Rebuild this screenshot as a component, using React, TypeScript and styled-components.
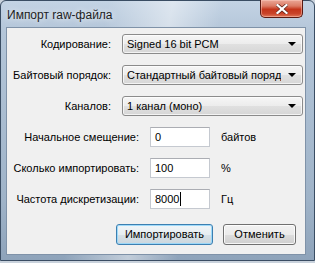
import React from "react";
import styled, { createGlobalStyle } from "styled-components";

const Global = createGlobalStyle`
  html, body { margin: 0; padding: 0; background: #c9d2dc; }
  body { font-family: "Liberation Sans", Arial, sans-serif; }
  * { box-sizing: border-box; }
`;

const Window = styled.div`
  width: 315px;
  height: 261px;
  border: 1px solid #3a4d63;
  border-radius: 6px 6px 0 0;
  background:
    linear-gradient(100deg, rgba(255,255,255,0) 30%, rgba(255,255,255,0.45) 48%, rgba(255,255,255,0) 62%),
    linear-gradient(180deg, #c3d3e4 0px, #b4c6d9 30px, #9fb3c8 200px, #8ea3ba 100%);
  display: flex;
  flex-direction: column;
  padding: 0 8px 5px 5px;
`;

const TitleBar = styled.div`
  height: 26px;
  display: flex;
  align-items: flex-start;
  justify-content: space-between;
`;

const Title = styled.div`
  font-size: 12px;
  color: #1e1e1e;
  padding: 7px 0 0 1px;
  text-shadow: 0 0 6px rgba(255,255,255,0.9);
`;

const CloseButton = styled.div`
  width: 43px;
  height: 18px;
  margin-top: -1px;
  margin-right: 3px;
  border: 1px solid #5b1a12;
  border-top: none;
  border-radius: 0 0 5px 5px;
  background: linear-gradient(180deg, #eba797 0%, #dc7c66 35%, #c4351b 55%, #c9442a 80%, #e0785a 100%);
  box-shadow: inset 0 0 0 1px rgba(255,210,200,0.45);
  display: flex;
  align-items: center;
  justify-content: center;
`;

const Client = styled.div`
  flex: 1;
  background: #f0f0f0;
  border: 1px solid #7f92a8;
  display: flex;
  flex-direction: column;
  padding: 6px 9px 0 0;
  font-size: 11px;
  color: #000;
`;

const Section = styled.div<{ $labelWidth: number; $top: number }>`
  display: grid;
  grid-template-columns: ${(p) => p.$labelWidth}px auto 1fr;
  grid-auto-rows: 20px;
  row-gap: 11px;
  column-gap: 11px;
  margin-top: ${(p) => p.$top}px;
  align-items: center;
`;

const Label = styled.div`
  text-align: right;
  white-space: nowrap;
  line-height: 20px;
`;

const Combo = styled.div`
  grid-column: span 2;
  width: 181px;
  height: 20px;
  border: 1px solid #8b8b8b;
  border-radius: 3px;
  background: linear-gradient(180deg, #f6f6f6 0%, #ececec 50%, #e0e0e0 51%, #d6d6d6 100%);
  box-shadow: inset 0 0 0 1px rgba(255,255,255,0.7);
  display: flex;
  align-items: center;
  padding: 0 6px 0 4px;
`;

const ComboText = styled.span`
  width: 154px;
  overflow: hidden;
  white-space: nowrap;
  line-height: 18px;
`;

const Arrow = styled.span`
  width: 0;
  height: 0;
  margin-left: auto;
  border-left: 4px solid transparent;
  border-right: 4px solid transparent;
  border-top: 4px solid #000;
`;

const TextBox = styled.div`
  width: 60px;
  height: 20px;
  background: #fff;
  border: 1px solid #c5c9d0;
  border-top-color: #abadb3;
  padding: 0 4px;
  line-height: 18px;
  display: flex;
  align-items: center;
`;

const Caret = styled.span`
  width: 1px;
  height: 14px;
  background: #000;
  margin-left: 1px;
`;

const Unit = styled.div`
  line-height: 20px;
`;

const Buttons = styled.div`
  display: flex;
  justify-content: flex-end;
  gap: 10px;
  margin-top: 15px;
`;

const Button = styled.div<{ $default?: boolean; $w: number }>`
  width: ${(p) => p.$w}px;
  height: 21px;
  border: 1px solid ${(p) => (p.$default ? "#3c7fb1" : "#707070")};
  border-radius: 3px;
  background: ${(p) =>
    p.$default
      ? "linear-gradient(180deg, #f0f5f8 0%, #e6edf1 50%, #d7e1e7 51%, #cbd6dd 100%)"
      : "linear-gradient(180deg, #f2f2f2 0%, #ebebeb 50%, #dddddd 51%, #cfcfcf 100%)"};
  box-shadow: inset 0 0 0 1px ${(p) => (p.$default ? "rgba(150,215,250,0.9)" : "rgba(255,255,255,0.8)")};
  display: flex;
  align-items: center;
  justify-content: center;
  line-height: 19px;
`;

export default function App() {
  return (
    <>
      <Global />
      <Window>
        <TitleBar>
          <Title>Импорт raw-файла</Title>
          <CloseButton>
            <svg width="12" height="10" viewBox="0 0 12 10">
              <path d="M1.5 1 L10.5 9 M10.5 1 L1.5 9" stroke="#5a2018" strokeWidth="3.6" strokeLinecap="square" />
              <path d="M1.5 1 L10.5 9 M10.5 1 L1.5 9" stroke="#ffffff" strokeWidth="2.2" strokeLinecap="square" />
            </svg>
          </CloseButton>
        </TitleBar>
        <Client>
          <Section $labelWidth={104} $top={0}>
            <Label>Кодирование:</Label>
            <Combo>
              <ComboText>Signed 16 bit PCM</ComboText>
              <Arrow />
            </Combo>
            <Label>Байтовый порядок:</Label>
            <Combo>
              <ComboText>Стандартный байтовый порядок</ComboText>
              <Arrow />
            </Combo>
            <Label>Каналов:</Label>
            <Combo>
              <ComboText>1 канал (моно)</ComboText>
              <Arrow />
            </Combo>
          </Section>
          <Section $labelWidth={132} $top={11}>
            <Label>Начальное смещение:</Label>
            <TextBox>0</TextBox>
            <Unit>байтов</Unit>
            <Label>Сколько импортировать:</Label>
            <TextBox>100</TextBox>
            <Unit>%</Unit>
            <Label>Частота дискретизации:</Label>
            <TextBox>
              8000
              <Caret />
            </TextBox>
            <Unit>Гц</Unit>
          </Section>
          <Buttons>
            <Button $default $w={97}>Импортировать</Button>
            <Button $w={73}>Отменить</Button>
          </Buttons>
        </Client>
      </Window>
    </>
  );
}
